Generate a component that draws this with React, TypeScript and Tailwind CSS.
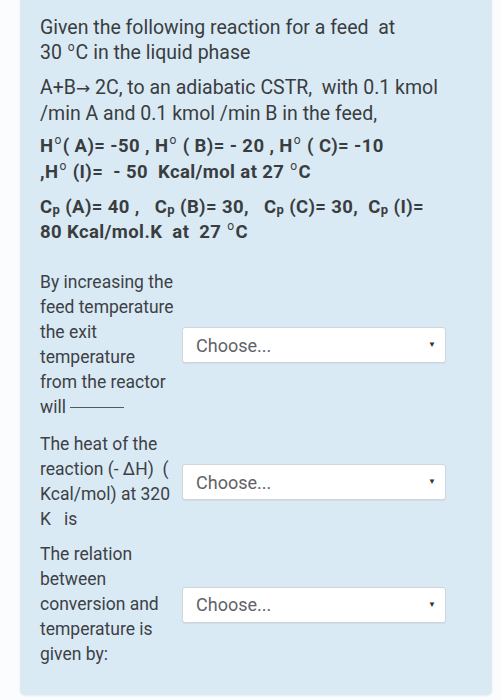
import React from 'react';

const Deg = () => <sup className="text-[12px] font-normal relative -top-[8px] px-[1px]">o</sup>;
const Cp = () => (
  <span>
    C<sub className="text-[13px] relative top-[1px]">p</sub>
  </span>
);

const Choose = () => (
  <div className="w-[264px] h-[36px] bg-white border border-[#cfd6dc] rounded-[3px] shadow-[0_1px_1px_rgba(0,0,0,0.05)] flex items-center justify-between pl-[13px] pr-[9px]">
    <span className="text-[18px] text-[#5f6368]">Choose...</span>
    <span className="text-[8px] text-[#333]">▼</span>
  </div>
);

const Blank = () => <span className="inline-block align-middle w-[54px] border-t border-[#555a5e] ml-[4px] mb-[2px]" />;

const questions = [
  {
    lines: ['By increasing the', 'feed temperature', 'the exit', 'temperature', 'from the reactor', <>will<Blank /></>],
    mt: 'mt-[25px]',
  },
  {
    lines: ['The heat of the', 'reaction (- ΔH)  (', 'Kcal/mol) at 320', 'K   is'],
    mt: 'mt-[12px]',
  },
  {
    lines: ['The relation', 'between', 'conversion and', 'temperature is', 'given by:'],
    mt: 'mt-[10px]',
  },
];

const App = () => {
  return (
    <div className="w-[502px] h-[700px] bg-[#fafcfd] overflow-hidden" style={{ fontFamily: 'Roboto, "Noto Sans", sans-serif' }}>
      <div className="ml-[20px] w-[472px] h-[695px] bg-[#d9eaf5] rounded-b-[5px] shadow-[0_1px_2px_rgba(0,0,0,0.08)] pl-[20px] pr-[6px] pt-[15px] text-[#3a3d40]">
        <div className="text-[19.5px] leading-[25px]">
          <p>
            Given the following reaction for a feed&nbsp; at
            <br />
            30 <Deg />C in the liquid phase
          </p>
          <p className="mt-[10px]">
            A+B<span style={{ fontFamily: '"DejaVu Sans", sans-serif' }} className="text-[17px]">→</span> 2C, to an adiabatic CSTR,&nbsp; with 0.1 kmol
            <br />
            /min A and 0.1 kmol /min B in the feed,
          </p>
        </div>
        <div className="text-[18.5px] font-bold leading-[26px] tracking-[0.4px] mt-[7px]">
          <p>
            H<Deg />( A)= -50 , H<Deg /> ( B)= - 20 , H<Deg /> ( C)= -10
            <br />
            ,H<Deg /> (I)=&nbsp; - 50&nbsp; Kcal/mol at 27 <Deg />C
          </p>
          <p className="mt-[10px] leading-[25px]">
            <Cp /> (A)= 40 ,&nbsp;&nbsp; <Cp /> (B)= 30,&nbsp;&nbsp; <Cp /> (C)= 30,&nbsp; <Cp /> (I)=
            <br />
            80 Kcal/mol.K&nbsp; at&nbsp; 27 <Deg />C
          </p>
        </div>

        {questions.map((q, i) => (
          <div key={i} className={`flex items-center ${q.mt}`}>
            <div className="w-[142px] text-[17.5px] leading-[25px] text-[#3d4145]">
              {q.lines.map((l, j) => (
                <div key={j} className="whitespace-pre">{l}</div>
              ))}
            </div>
            <Choose />
          </div>
        ))}
      </div>
    </div>
  );
};

export default App;
